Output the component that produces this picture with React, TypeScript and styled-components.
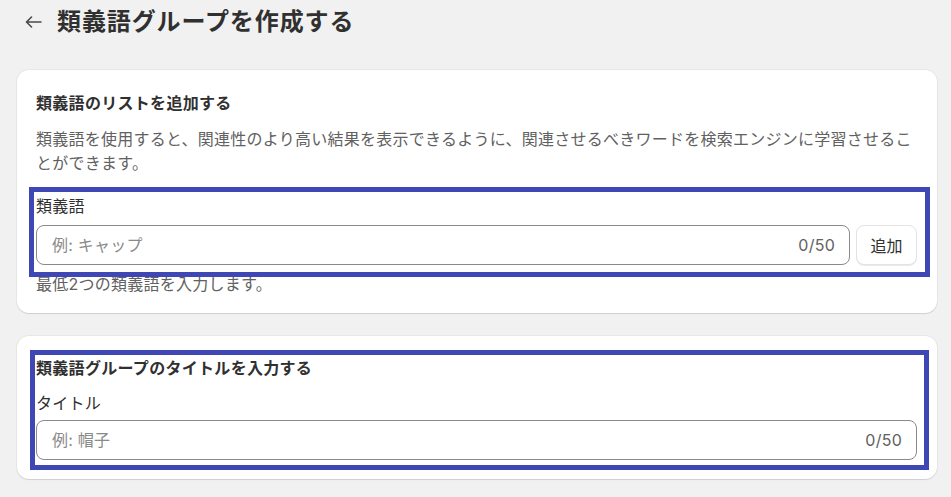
import React from 'react';
import styled, {createGlobalStyle} from "styled-components";

const GlobalStyle = createGlobalStyle`
  body {
    margin: 0;
    background: #f1f1f1;
    font-family: Inter, "Noto Sans CJK JP", sans-serif;
    color: #303030;
    letter-spacing: 0.25px;
  }
`

const Page = styled.div`
  padding: 6px 14px 0 17px;
`

const Header = styled.div`
  display: flex;
  align-items: center;
  gap: 15px;
  height: 32px;
  padding-left: 8px;
  margin-bottom: 32px;
`

const BackButton = styled.button`
  display: flex;
  align-items: center;
  justify-content: center;
  width: 17px;
  height: 32px;
  padding: 0;
  border: none;
  background: none;
  color: #4a4a4a;
  cursor: pointer;
`

const Title = styled.h1`
  margin: 0;
  font-size: 24px;
  line-height: 32px;
  font-weight: 700;
  letter-spacing: 0.9px;
  color: #303030;
`

const Card = styled.section<{ $pt: number, $pb: number }>`
  position: relative;
  background: #fff;
  border-radius: 12px;
  padding: ${p => p.$pt}px 20px ${p => p.$pb}px 19px;
  box-shadow: 0 1px 1px rgba(0, 0, 0, 0.1), 0 0 0 1px rgba(0, 0, 0, 0.04);
  margin-bottom: 23px;
`

const CardTitle = styled.h2`
  margin: 0;
  font-size: 16px;
  line-height: 24px;
  font-weight: 700;
  letter-spacing: 0.3px;
  color: #303030;
`

const Description = styled.p`
  margin: 12px 0 0;
  font-size: 16px;
  line-height: 24px;
  color: #616161;
`

const Label = styled.label<{ $mt: number }>`
  display: block;
  margin-top: ${p => p.$mt}px;
  font-size: 16px;
  line-height: 24px;
  color: #303030;
`

const FieldRow = styled.div<{ $mt: number }>`
  display: flex;
  gap: 6px;
  margin-top: ${p => p.$mt}px;
`

const InputBox = styled.div`
  flex: 1;
  display: flex;
  align-items: center;
  height: 40px;
  box-sizing: border-box;
  border: 1px solid #8a8a8a;
  border-radius: 8px;
  padding: 0 14px 0 15px;
`

const Input = styled.input`
  flex: 1;
  min-width: 0;
  border: none;
  outline: none;
  padding: 0;
  background: transparent;
  font-family: inherit;
  font-size: 16px;
  letter-spacing: inherit;
  color: #303030;

  &::placeholder {
    color: #8a8a8a;
  }
`

const Counter = styled.span`
  font-size: 16px;
  color: #616161;
`

const AddButton = styled.button`
  height: 40px;
  width: 61px;
  border: 1px solid #e3e3e3;
  border-radius: 8px;
  background: #fff;
  box-shadow: 0 1px 0 rgba(0, 0, 0, 0.08);
  font-family: inherit;
  font-size: 16px;
  color: #303030;
  cursor: pointer;
`

const HelpText = styled.div`
  margin-top: 7px;
  font-size: 16px;
  line-height: 24px;
  color: #616161;
`

// annotation frame drawn over a field group
const Frame = styled.div<{ $top: number, $left: number, $width: number, $height: number }>`
  position: absolute;
  top: ${p => p.$top}px;
  left: ${p => p.$left}px;
  width: ${p => p.$width}px;
  height: ${p => p.$height}px;
  box-sizing: border-box;
  border: 5px solid #3f47b5;
  pointer-events: none;
`

type TextFieldPropsType = {
    placeholder: string
    max: number
    withButton?: boolean
    mt: number
}

const TextField = (props: TextFieldPropsType) => {
    return (
        <FieldRow $mt={props.mt}>
            <InputBox>
                <Input placeholder={props.placeholder}/>
                <Counter>0/{props.max}</Counter>
            </InputBox>
            {props.withButton && <AddButton>追加</AddButton>}
        </FieldRow>
    );
};

const App = () => {
    return (
        <Page>
            <GlobalStyle/>
            <Header>
                <BackButton aria-label="戻る">
                    <svg width="17" height="12" viewBox="0 0 17 12" fill="none" stroke="currentColor"
                         strokeWidth="1.6" strokeLinecap="round" strokeLinejoin="round">
                        <path d="M16 6H1.5M6.5 1L1.5 6l5 5"/>
                    </svg>
                </BackButton>
                <Title>類義語グループを作成する</Title>
            </Header>

            <Card $pt={21} $pb={17}>
                <CardTitle>類義語のリストを追加する</CardTitle>
                <Description>
                    類義語を使用すると、関連性のより高い結果を表示できるように、関連させるべきワードを検索エンジンに学習させることができます。
                </Description>
                <Label $mt={19}>類義語</Label>
                <TextField placeholder="例: キャップ" max={50} withButton mt={7}/>
                <HelpText>最低2つの類義語を入力します。</HelpText>
                <Frame $top={117} $left={12} $width={901} $height={90}/>
            </Card>

            <Card $pt={20} $pb={19}>
                <CardTitle>類義語グループのタイトルを入力する</CardTitle>
                <Label $mt={11}>タイトル</Label>
                <TextField placeholder="例: 帽子" max={50} mt={5}/>
                <Frame $top={14} $left={13} $width={899} $height={120}/>
            </Card>
        </Page>
    );
};

export default App;
